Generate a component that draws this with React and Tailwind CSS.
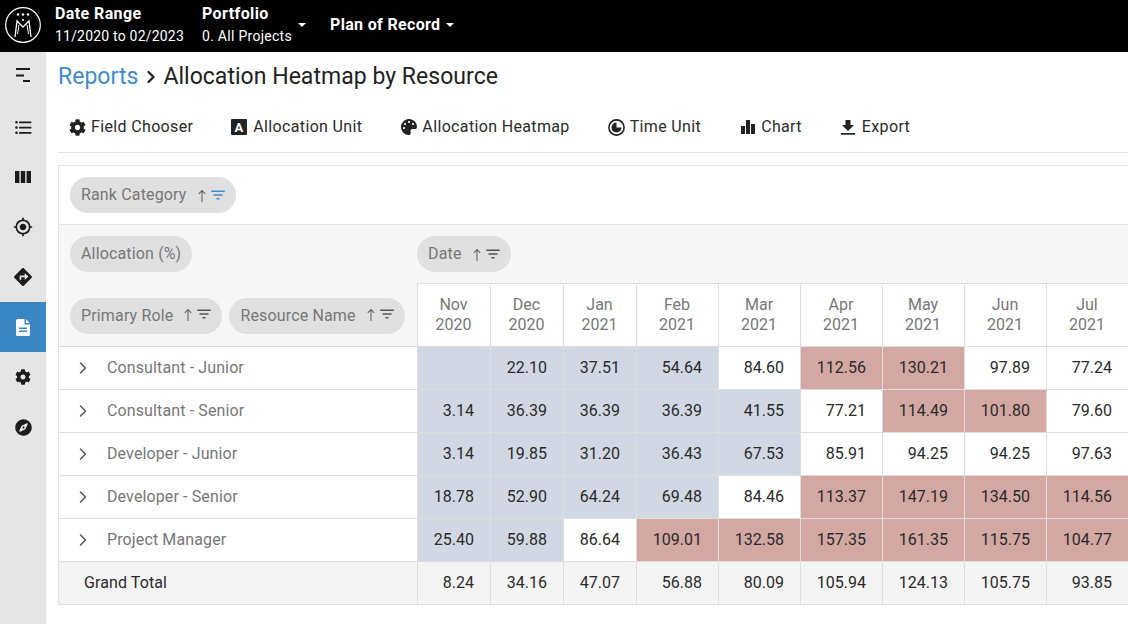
import { FaCog, FaCompass, FaDirections, FaPalette } from "react-icons/fa";
import { MdFilterList, MdFormatListBulleted, MdGpsFixed } from "react-icons/md";
import { ChevronRight } from "lucide-react";

const months = [
  ["Nov", "2020"], ["Dec", "2020"], ["Jan", "2021"], ["Feb", "2021"], ["Mar", "2021"],
  ["Apr", "2021"], ["May", "2021"], ["Jun", "2021"], ["Jul", "2021"],
];

const rows = [
  ["Consultant - Junior", ["", "22.10", "37.51", "54.64", "84.60", "112.56", "130.21", "97.89", "77.24"]],
  ["Consultant - Senior", ["3.14", "36.39", "36.39", "36.39", "41.55", "77.21", "114.49", "101.80", "79.60"]],
  ["Developer - Junior", ["3.14", "19.85", "31.20", "36.43", "67.53", "85.91", "94.25", "94.25", "97.63"]],
  ["Developer - Senior", ["18.78", "52.90", "64.24", "69.48", "84.46", "113.37", "147.19", "134.50", "114.56"]],
  ["Project Manager", ["25.40", "59.88", "86.64", "109.01", "132.58", "157.35", "161.35", "115.75", "104.77"]],
];

const totals = ["8.24", "34.16", "47.07", "56.88", "80.09", "105.94", "124.13", "105.75", "93.85"];

const colWidths = ["w-[73px]", "w-[73px]", "w-[73px]", "w-[82px]", "w-[82px]", "w-[82px]", "w-[82px]", "w-[82px]", "w-[82px]"];

function heatClass(value) {
  const n = parseFloat(value);
  if (value === "" || n < 70) return "bg-[#d1d8e3]";
  if (n > 100) return "bg-[#d3a8a2]";
  return "bg-white";
}

function Logo() {
  return (
    <svg width="36" height="36" viewBox="0 0 36 36" fill="none" stroke="white" className="mt-[2px] shrink-0">
      <circle cx="18" cy="18" r="17.3" strokeWidth="1.2" />
      <path d="M10 30 L12 14 L18 20 L24 14 L26 30" strokeWidth="1.3" />
      <path d="M12.5 27 L14 18 M23.5 27 L22 18" strokeWidth="1" />
      <circle cx="13" cy="7.5" r="1.3" fill="white" stroke="none" />
      <circle cx="18" cy="7.5" r="1.3" fill="white" stroke="none" />
      <circle cx="23" cy="7.5" r="1.3" fill="white" stroke="none" />
      <circle cx="18" cy="13" r="1" fill="white" stroke="none" />
    </svg>
  );
}

function Caret({ className = "" }) {
  return <span className={`mt-[2px] h-0 w-0 border-x-[4px] border-t-[4px] border-x-transparent border-t-white ${className}`} />;
}

function MenuIcon() {
  return (
    <svg width="14" height="14" viewBox="0 0 14 14" fill="#1c1c1c" className="mb-[4px]">
      <rect x="0" y="0" width="14" height="2" />
      <rect x="0" y="6.5" width="8" height="2" />
      <rect x="7" y="12" width="7" height="2" />
    </svg>
  );
}

function ColumnsIcon() {
  return (
    <svg width="16" height="12" viewBox="0 0 16 12" fill="#1c1c1c">
      <rect x="0" y="0" width="4.4" height="12" />
      <rect x="5.8" y="0" width="4.4" height="12" />
      <rect x="11.6" y="0" width="4.4" height="12" />
    </svg>
  );
}

function ReportIcon() {
  return (
    <svg width="14" height="17" viewBox="0 0 14 17" fill="white">
      <path fillRule="evenodd" d="M1.5 0 H8.5 V5.5 H14 V15.5 A1.5 1.5 0 0 1 12.5 17 H1.5 A1.5 1.5 0 0 1 0 15.5 V1.5 A1.5 1.5 0 0 1 1.5 0 Z M3 8.5 V10 H11 V8.5 Z M3 11.5 V13 H11 V11.5 Z" />
      <path d="M10 0.3 L13.7 4 H10 Z" />
    </svg>
  );
}

function TimeIcon() {
  return (
    <svg width="17" height="17" viewBox="0 0 17 17">
      <circle cx="8.5" cy="8.5" r="7.6" fill="none" stroke="#222" strokeWidth="1.6" />
      <path d="M8.5 8.5 H13.5 A5 5 0 1 1 8.5 3.5 Z" fill="#222" />
    </svg>
  );
}

function BarsIcon() {
  return (
    <svg width="14" height="14" viewBox="0 0 14 14" fill="#222">
      <rect x="0" y="6" width="4" height="8" />
      <rect x="5" y="0" width="4" height="14" />
      <rect x="10" y="4" width="4" height="10" />
    </svg>
  );
}

function ExportIcon() {
  return (
    <svg width="14" height="15" viewBox="0 0 14 15" fill="#222">
      <path d="M4.5 0 H9.5 V5 H13 L7 11 L1 5 H4.5 Z" />
      <rect x="0" y="13" width="14" height="1.7" />
    </svg>
  );
}

function SortArrow() {
  return (
    <svg width="14" height="14" viewBox="0 0 14 14" fill="none" stroke="#666" strokeWidth="1.1" className="mt-[2px]">
      <path d="M7 13 V1.5 M3.8 4.8 L7 1.5 L10.2 4.8" />
    </svg>
  );
}

function Sidebar() {
  const items = [
    [<MenuIcon />, false],
    [<MdFormatListBulleted size={21} />, false],
    [<ColumnsIcon />, false],
    [<MdGpsFixed size={20} />, false],
    [<FaDirections size={18} />, false],
    [<ReportIcon />, true],
    [<FaCog size={16} />, false],
    [<FaCompass size={17} />, false],
  ];
  return (
    <nav className="flex w-[46px] shrink-0 flex-col bg-[#e5e5e5] text-[#1c1c1c]">
      {items.map(([icon, active], i) => (
        <div key={i} className={`flex h-[50px] items-center justify-center ${active ? "bg-[#3a86c2] text-white" : ""}`}>
          {icon}
        </div>
      ))}
    </nav>
  );
}

function ToolButton({ icon, label }) {
  return (
    <div className="flex items-center gap-[5px] text-[16px] tracking-[0.35px] text-[#2b2b2b]">
      <span className="flex w-[17px] justify-center text-[#222]">{icon}</span>
      {label}
    </div>
  );
}

function Pill({ label, filterColor = "text-[#555]", raised = false }) {
  return (
    <div className="flex h-[36px] items-center rounded-full bg-[#e0e0e0] pr-[9px] pl-[11px] text-[16px] tracking-[0.15px] text-[#777]">
      <span>{label}</span>
      <span className={`ml-[8px] flex items-center ${raised ? "-translate-y-[2px]" : ""}`}>
        <SortArrow />
        <MdFilterList size={18} className={filterColor} />
      </span>
    </div>
  );
}

function TableCell({ value, width, className }) {
  return (
    <div className={`flex h-full shrink-0 items-center justify-end border-r border-[#dedede] pr-[16px] text-[16px] text-[#2a2a2a] ${width} ${className}`}>
      {value}
    </div>
  );
}

export default function App() {
  return (
    <div className="flex h-[624px] w-[1128px] flex-col overflow-hidden bg-white font-['Roboto',sans-serif]">
      <header className="flex h-[52px] shrink-0 items-center bg-black pb-[4px] pl-[5px] text-white">
        <Logo />
        <div className="ml-[14px] w-[147px]">
          <div className="text-[16px] leading-[20px] font-bold tracking-[0.4px]">Date Range</div>
          <div className="mt-[3px] text-[14px] leading-[18px] tracking-[0.2px]">11/2020 to 02/2023</div>
        </div>
        <div>
          <div className="text-[16px] leading-[20px] font-bold tracking-[0.4px]">Portfolio</div>
          <div className="mt-[3px] text-[14px] leading-[18px] tracking-[0.28px]">0. All Projects</div>
        </div>
        <Caret className="ml-[6px]" />
        <div className="mt-[1px] ml-[24px] text-[16px] font-bold tracking-[0.33px]">Plan of Record</div>
        <Caret className="ml-[6px]" />
      </header>

      <div className="flex min-h-0 flex-1">
        <Sidebar />
        <main className="min-w-0 flex-1 pl-[12px]">
          <h1 className="flex h-[50px] items-center text-[23px] tracking-[0.03px] text-[#222]">
            <span className="text-[#428bca]">Reports</span>
            <ChevronRight size={20} strokeWidth={2.8} className="mr-[2px] ml-[3px]" />
            <span>Allocation Heatmap by Resource</span>
          </h1>

          <div className="flex h-[51px] items-center gap-[38px] border-b border-[#e3e3e3] pl-[11px]">
            <ToolButton icon={<FaCog size={17} />} label="Field Chooser" />
            <ToolButton icon={<span className="flex h-[16px] w-[16px] -translate-x-[1px] items-center justify-center rounded-[1px] bg-[#222] text-[13px] leading-none font-bold tracking-normal text-white">A</span>} label="Allocation Unit" />
            <ToolButton icon={<FaPalette size={16} />} label="Allocation Heatmap" />
            <ToolButton icon={<TimeIcon />} label="Time Unit" />
            <ToolButton icon={<BarsIcon />} label="Chart" />
            <ToolButton icon={<ExportIcon />} label="Export" />
          </div>

          <section className="mt-[12px] w-[1100px] border-t border-l border-[#e3e3e3]">
            <div className="flex h-[59px] items-center border-b border-[#e3e3e3] pl-[11px]">
              <Pill label="Rank Category" filterColor="text-[#428bca]" />
            </div>

            <div className="flex h-[121px] flex-col bg-[#f7f7f7]">
              <div className="flex h-[58px] shrink-0 items-center">
                <div className="w-[358px] pl-[11px]">
                  <div className="flex h-[36px] w-fit items-center rounded-full bg-[#e0e0e0] px-[11px] text-[16px] tracking-[0.15px] text-[#777]">Allocation (%)</div>
                </div>
                <Pill label="Date" />
              </div>
              <div className="flex min-h-0 flex-1">
                <div className="flex w-[358px] shrink-0 items-center gap-[7px] pt-[3px] pl-[11px]">
                  <Pill label="Primary Role" raised />
                  <Pill label="Resource Name" raised />
                </div>
                {months.map(([month, year], i) => (
                  <div key={month + year} className={`flex shrink-0 flex-col items-center justify-center border-t border-r border-[#dedede] bg-white pr-[1px] text-[16px] leading-[20px] text-[#777] ${i === 0 ? "w-[74px] border-l" : colWidths[i]}`}>
                    <span>{month}</span>
                    <span>{year}</span>
                  </div>
                ))}
              </div>
            </div>

            {rows.map(([name, values]) => (
              <div key={name} className="flex h-[43px] border-t border-[#dedede]">
                <div className="flex w-[359px] shrink-0 items-center border-r border-[#dedede] pl-[14px] text-[16px] tracking-[0.12px] text-[#777]">
                  <ChevronRight size={20} strokeWidth={1.8} className="text-[#555]" />
                  <span className="ml-[14px]">{name}</span>
                </div>
                {values.map((value, i) => (
                  <TableCell key={i} value={value} width={colWidths[i]} className={heatClass(value)} />
                ))}
              </div>
            ))}

            <div className="flex h-[44px] border-y border-[#dedede] bg-[#f4f4f4]">
              <div className="flex w-[359px] shrink-0 items-center border-r border-[#dedede] pl-[25px] text-[16px] tracking-[0.1px] text-[#2a2a2a]">Grand Total</div>
              {totals.map((value, i) => (
                <TableCell key={i} value={value} width={colWidths[i]} className="" />
              ))}
            </div>
          </section>
        </main>
      </div>
    </div>
  );
}
